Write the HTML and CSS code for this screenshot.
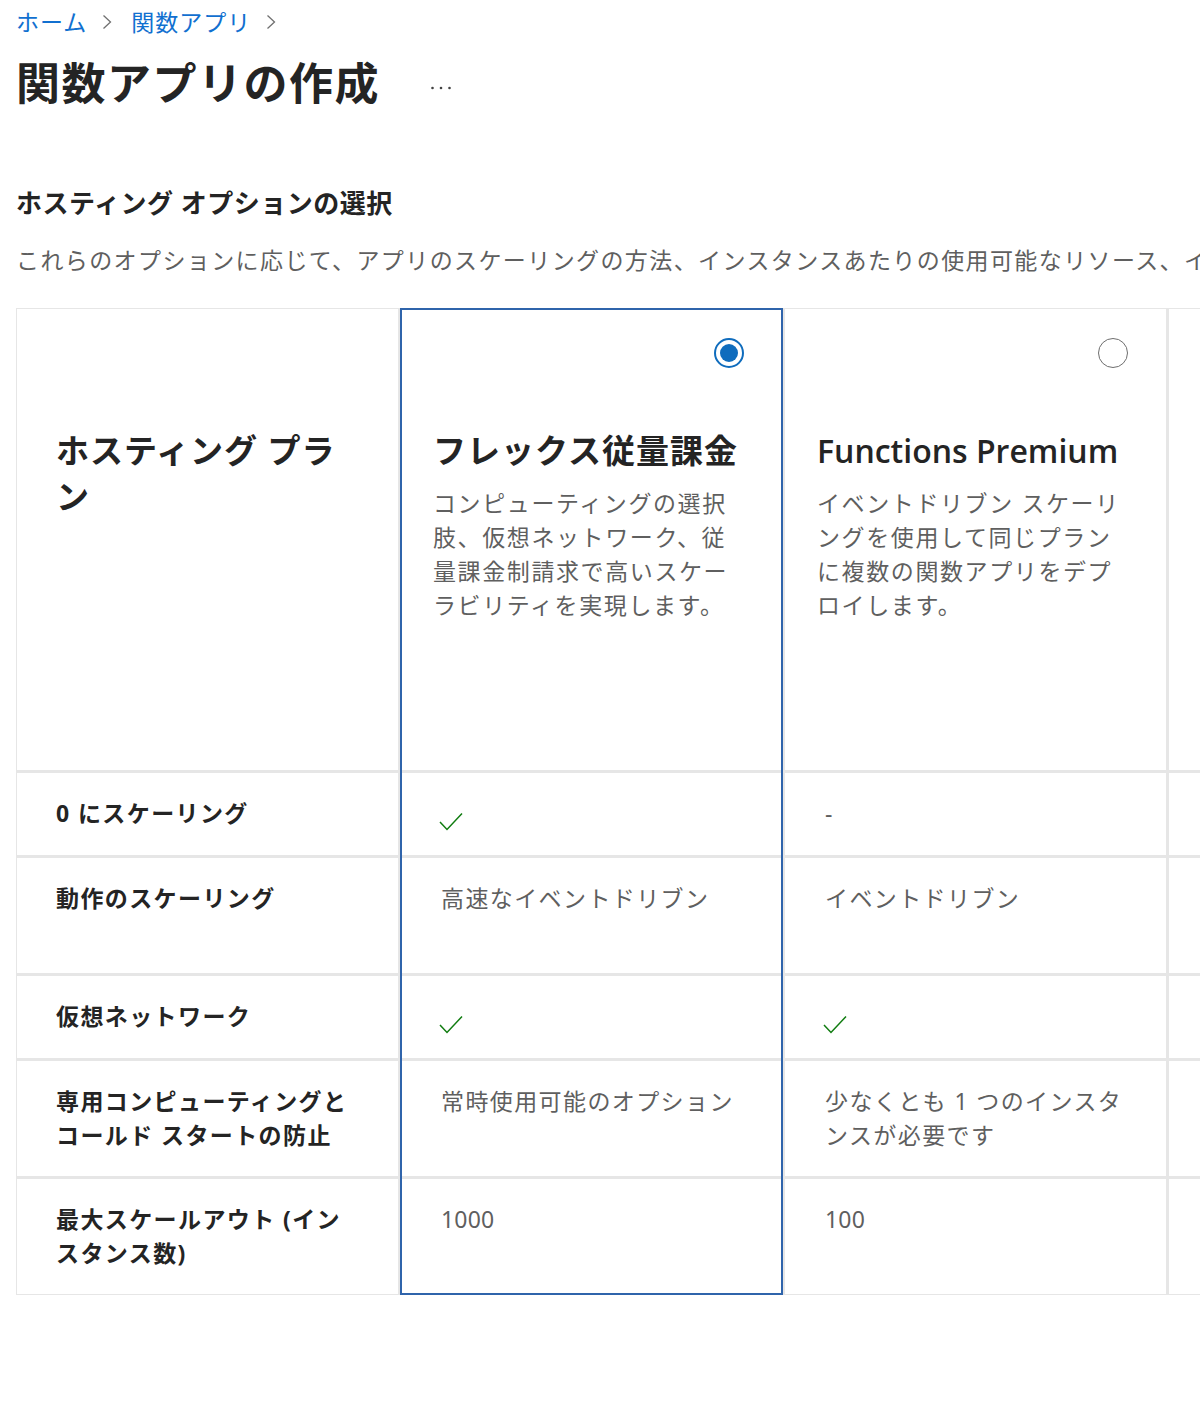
FILE: index.html
```html
<!DOCTYPE html>
<html lang="ja">
<head>
<meta charset="utf-8">
<title>関数アプリの作成</title>
<link rel="stylesheet" href="styles.css">
</head>
<body>
<div class="page">
  <nav class="crumbs">
    <a class="crumb" href="#">ホーム</a>
    <svg class="chev" viewBox="0 0 10 16"><path d="M1.5 1.5 L8.5 8 L1.5 14.5" fill="none" stroke="#707070" stroke-width="1.3"/></svg>
    <a class="crumb" href="#">関数アプリ</a>
    <svg class="chev" viewBox="0 0 10 16"><path d="M1.5 1.5 L8.5 8 L1.5 14.5" fill="none" stroke="#707070" stroke-width="1.3"/></svg>
  </nav>

  <div class="title-row">
    <h1 class="title">関数アプリの作成</h1>
    <button class="more" type="button" aria-label="その他">
      <svg viewBox="0 0 22 6" width="22" height="6"><circle cx="2.5" cy="3" r="1.3" fill="#424242"/><circle cx="11" cy="3" r="1.3" fill="#424242"/><circle cx="19.5" cy="3" r="1.3" fill="#424242"/></svg>
    </button>
  </div>

  <h2 class="section">ホスティング オプションの選択</h2>
  <p class="intro">これらのオプションに応じて、アプリのスケーリングの方法、インスタンスあたりの使用可能なリソース、インフラストラクチャの機能、および価格が決まります。</p>

  <div class="plans">
    <div class="cell head label-head">
      <div class="radio-row"></div>
      <h3 class="plan-name">ホスティング プラン</h3>
    </div>
    <div class="cell head">
      <div class="radio-row"><span class="radio on"></span></div>
      <h3 class="plan-name nowrap">フレックス従量課金</h3>
      <p class="desc">コンピューティングの選択肢、仮想ネットワーク、従量課金制請求で高いスケーラビリティを実現します。</p>
    </div>
    <div class="cell head">
      <div class="radio-row"><span class="radio"></span></div>
      <h3 class="plan-name nowrap latin">Functions Premium</h3>
      <p class="desc">イベントドリブン スケーリングを使用して同じプランに複数の関数アプリをデプロイします。</p>
    </div>
    <div class="cell head">
      <div class="radio-row"><span class="radio"></span></div>
      <h3 class="plan-name nowrap latin">App Service</h3>
      <p class="desc">専用のコンピューティングで関数アプリを Web アプリと同じプランで実行します。</p>
    </div>

    <div class="cell label">0 にスケーリング</div>
    <div class="cell"><svg class="check" viewBox="0 0 24 19"><path d="M1 10 L8 17.5 L23 1.5" fill="none" stroke="#107c10" stroke-width="1.5"/></svg></div>
    <div class="cell">-</div>
    <div class="cell">-</div>

    <div class="cell label">動作のスケーリング</div>
    <div class="cell">高速なイベントドリブン</div>
    <div class="cell">イベントドリブン</div>
    <div class="cell">ルールベースの手動または自動スケーリング</div>

    <div class="cell label">仮想ネットワーク</div>
    <div class="cell"><svg class="check" viewBox="0 0 24 19"><path d="M1 10 L8 17.5 L23 1.5" fill="none" stroke="#107c10" stroke-width="1.5"/></svg></div>
    <div class="cell"><svg class="check" viewBox="0 0 24 19"><path d="M1 10 L8 17.5 L23 1.5" fill="none" stroke="#107c10" stroke-width="1.5"/></svg></div>
    <div class="cell"><svg class="check" viewBox="0 0 24 19"><path d="M1 10 L8 17.5 L23 1.5" fill="none" stroke="#107c10" stroke-width="1.5"/></svg></div>

    <div class="cell label">専用コンピューティングとコールド スタートの防止</div>
    <div class="cell">常時使用可能のオプション</div>
    <div class="cell">少なくとも 1 つのインスタンスが必要です</div>
    <div class="cell">常に実行されているインスタンス</div>

    <div class="cell label">最大スケールアウト (インスタンス数)</div>
    <div class="cell num">1000</div>
    <div class="cell num">100</div>
    <div class="cell num">10-30</div>

    <div class="selected-frame"></div>
  </div>
</div>
</body>
</html>
```

FILE: styles.css
```css
html, body {
  margin: 0;
  overflow: hidden;
  background: #ffffff;
}

body {
  font-family: "Noto Sans", "Noto Sans CJK JP", sans-serif;
  color: #242424;
}

.page {
  padding: 5px 0 0 16px;
}

/* breadcrumb */
.crumbs {
  display: flex;
  align-items: center;
  height: 34px;
  font-size: 23px;
  line-height: 34px;
  letter-spacing: 1px;
}

.crumb {
  color: #1170d0;
  text-decoration: none;
}

.chev {
  width: 10px;
  height: 16px;
  margin: 0 19px 0 15px;
}

/* title */
.title-row {
  display: flex;
  align-items: center;
  margin-top: 16px;
}

.title {
  margin: 0;
  font-size: 44px;
  line-height: 56px;
  letter-spacing: 1.5px;
  font-weight: 700;
  color: #242424;
}

.more {
  margin: 10px 0 0 50px;
  padding: 0;
  border: 0;
  background: none;
  display: flex;
}

.section {
  margin: 73px 0 0;
  font-size: 26px;
  line-height: 38px;
  letter-spacing: 0.5px;
  font-weight: 700;
  color: #242424;
}

.intro {
  margin: 21px 0 0;
  font-size: 23px;
  line-height: 34px;
  letter-spacing: 1.4px;
  color: #5f5f5f;
  white-space: nowrap;
}

/* plans grid */
.plans {
  position: relative;
  margin-top: 31px;
  display: grid;
  grid-template-columns: repeat(4, 381px);
  grid-template-rows: repeat(6, auto);
  gap: 3px;
  width: max-content;
  background: #e6e6e6;
  border: 1px solid #e6e6e6;
}

.cell {
  background: #ffffff;
  padding: 23px 40px 24px 40px;
  font-size: 23px;
  line-height: 34px;
  letter-spacing: 1.4px;
  color: #5f5f5f;
}

.cell.num {
  letter-spacing: 0.2px;
}

.label {
  padding-left: 39px;
  font-weight: 700;
  color: #242424;
}

.head {
  height: 461px;
  box-sizing: border-box;
  padding: 29px 38px 0 32px;
}

.label-head {
  padding-left: 39px;
  padding-right: 40px;
}

.radio-row {
  display: flex;
  justify-content: flex-end;
  height: 30px;
}

.radio {
  width: 30px;
  height: 30px;
  box-sizing: border-box;
  border-radius: 50%;
  border: 1.5px solid #6e6e6e;
  display: flex;
  align-items: center;
  justify-content: center;
}

.radio.on {
  border: 2px solid #0f6cbd;
}

.radio.on::after {
  content: "";
  width: 18px;
  height: 18px;
  border-radius: 50%;
  background: #0f6cbd;
}

.plan-name {
  margin: 60px 0 0;
  font-size: 33px;
  line-height: 46px;
  letter-spacing: 1px;
  font-weight: 700;
  color: #242424;
}

.plan-name.nowrap {
  white-space: nowrap;
}

.plan-name.latin {
  font-family: "Open Sans", "Noto Sans CJK JP", sans-serif;
  font-size: 32px;
  font-weight: 600;
  letter-spacing: 0;
}

.desc {
  margin: 12px 0 0;
  font-size: 23px;
  line-height: 34px;
  letter-spacing: 1.6px;
  color: #5f5f5f;
}

.check {
  display: block;
  width: 24px;
  height: 19px;
  margin: 16px 0 0 -2px;
}

.selected-frame {
  position: absolute;
  grid-column: 2 / 3;
  grid-row: 1 / 7;
  top: -1px;
  bottom: -1px;
  left: -1px;
  right: -1px;
  border: 2px solid #2f64ab;
  pointer-events: none;
}
```
